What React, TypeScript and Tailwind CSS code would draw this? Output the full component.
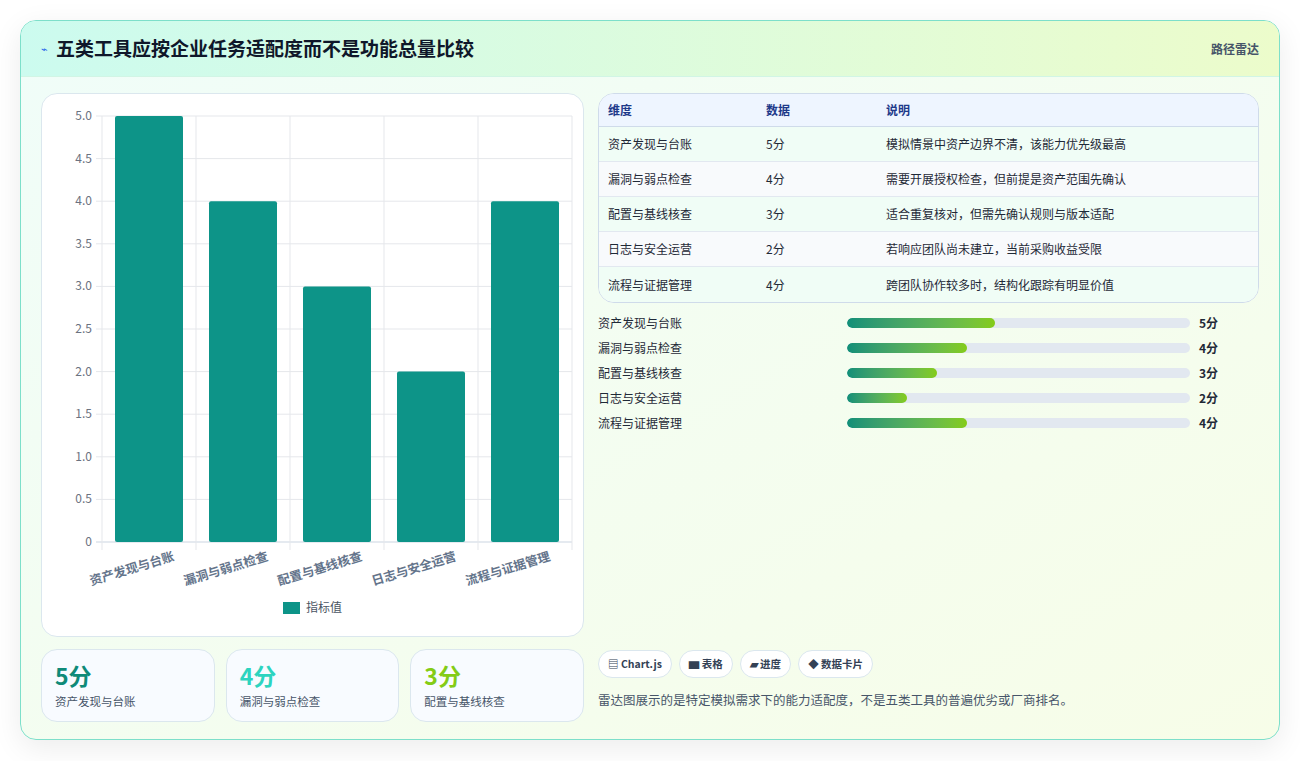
import React from "react";

const rows = [
  ["资产发现与台账", "5分", "模拟情景中资产边界不清，该能力优先级最高", 5],
  ["漏洞与弱点检查", "4分", "需要开展授权检查，但前提是资产范围先确认", 4],
  ["配置与基线核查", "3分", "适合重复核对，但需先确认规则与版本适配", 3],
  ["日志与安全运营", "2分", "若响应团队尚未建立，当前采购收益受限", 2],
  ["流程与证据管理", "4分", "跨团队协作较多时，结构化跟踪有明显价值", 4],
] as const;
const barW: Record<number, number> = { 5: 43.2, 4: 35, 3: 26.2, 2: 17.5 };

function Chart() {
  const x0 = 60, x1 = 530, yTop = 22, yBot = 448;
  const ticks = ["5.0", "4.5", "4.0", "3.5", "3.0", "2.5", "2.0", "1.5", "1.0", "0.5", "0"];
  const cw = (x1 - x0) / 5;
  return (
    <svg width="541" height="541" className="block">
      {ticks.map((t, i) => {
        const y = yTop + ((yBot - yTop) / 10) * i;
        return (
          <g key={t}>
            <line x1={x0 - 6} x2={x1} y1={y} y2={y} stroke={i === 10 ? "#cbd5e1" : "#e5e7eb"} />
            <text x={x0 - 10} y={y + 4} textAnchor="end" fontSize="12" fill="#6b7280">{t}</text>
          </g>
        );
      })}
      {[0, 1, 2, 3, 4, 5].map((i) => (
        <line key={i} x1={x0 + cw * i} x2={x0 + cw * i} y1={yTop} y2={yBot + 8} stroke="#e5e7eb" />
      ))}
      {rows.map((r, i) => {
        const h = ((yBot - yTop) / 5) * r[3];
        const cx = x0 + cw * i + cw / 2;
        return (
          <g key={i}>
            <rect x={cx - 34} y={yBot - h} width={68} height={h} rx={2} fill="#0d9488" />
            <text x={cx + 26} y={yBot + 18} textAnchor="end" fontSize="12.5" fontWeight="600" fill="#64748b" transform={`rotate(-17 ${cx + 26} ${yBot + 18})`}>{r[0]}</text>
          </g>
        );
      })}
      <rect x={241} y={508} width={17} height={12} fill="#0d9488" />
      <text x={264} y={518} fontSize="12" fill="#4b5563">指标值</text>
    </svg>
  );
}

export default function App() {
  return (
    <div className="w-[1300px] h-[761px] bg-white p-5 pt-[20px]" style={{ fontFamily: '"Noto Sans CJK SC", "Noto Sans", sans-serif' }}>
      <div className="h-[720px] rounded-2xl border border-[#7ddfca] overflow-hidden shadow-[0_8px_30px_rgba(0,0,0,0.08)] bg-gradient-to-br from-[#f0fdf9] to-[#f7fde8]">
        <div className="h-[56px] flex items-center justify-between px-5 bg-gradient-to-r from-[#ccfbef] to-[#ecfccb] border-b border-[#d1f5e5]">
          <div className="flex items-center gap-2">
            <span className="text-[#2563eb] text-[11px]">⌁</span>
            <span className="text-[19px] font-bold text-[#0f172a]">五类工具应按企业任务适配度而不是功能总量比较</span>
          </div>
          <span className="text-[12px] font-semibold text-[#475569]">路径雷达</span>
        </div>
        <div className="flex gap-[14px] px-5 pt-4">
          <div className="w-[543px] flex flex-col gap-3">
            <div className="h-[544px] rounded-2xl bg-white border border-[#dbe7ee]">
              <Chart />
            </div>
            <div className="flex gap-[11px]">
              {[["5分", "text-[#0f8a78]", "资产发现与台账"], ["4分", "text-[#2dd4bf]", "漏洞与弱点检查"], ["3分", "text-[#84cc16]", "配置与基线核查"]].map(([v, c, l]) => (
                <div key={l} className="w-[174px] h-[73px] rounded-2xl border border-[#dbe7ee] bg-[#f8fbff] px-[13px] pt-[10px]">
                  <div className={`text-[23px] font-bold leading-[30px] ${c}`}>{v}</div>
                  <div className="text-[11.5px] text-[#475569] mt-[3px]">{l}</div>
                </div>
              ))}
            </div>
          </div>
          <div className="flex-1 flex flex-col">
            <div className="rounded-2xl border border-[#cfdbea] overflow-hidden bg-white">
              <div className="h-[33px] flex items-center bg-[#eef5ff] border-b border-[#cfdbea] text-[12px] font-semibold text-[#1e3a8a] px-[9px]">
                <div className="w-[158px]">维度</div><div className="w-[120px]">数据</div><div>说明</div>
              </div>
              {rows.map((r, i) => (
                <div key={i} className={`h-[35px] flex items-center px-[9px] text-[12px] text-[#1f2937] ${i < 4 ? "border-b border-[#e2e8f0]" : ""} ${i % 2 ? "bg-[#f8fafc]" : "bg-[#f0fdf6]"}`}>
                  <div className="w-[158px]">{r[0]}</div><div className="w-[120px]">{r[1]}</div><div>{r[2]}</div>
                </div>
              ))}
            </div>
            <div className="flex flex-col gap-[9px] mt-[12px]">
              {rows.map((r, i) => (
                <div key={i} className="flex items-center h-[16px] text-[12px]">
                  <div className="w-[249px] text-[#1f2937]">{r[0]}</div>
                  <div className="w-[343px] h-[10px] rounded-full bg-[#e2e8f0] overflow-hidden">
                    <div className="h-full rounded-full bg-gradient-to-r from-[#0f8f78] to-[#84cc16]" style={{ width: `${barW[r[3]]}%` }} />
                  </div>
                  <div className="ml-[9px] font-bold text-[#1f2937]">{r[1]}</div>
                </div>
              ))}
            </div>
            <div className="mt-auto mb-[12px]">
              <div className="flex gap-[7px]">
                {["▤ Chart.js", "▆ 表格", "▰ 进度", "◆ 数据卡片"].map((c) => (
                  <span key={c} className="h-[28px] px-[9px] flex items-center rounded-full border border-[#dbe7ee] bg-white text-[10.5px] font-semibold text-[#334155]">{c}</span>
                ))}
              </div>
              <div className="mt-[13px] text-[12.5px] text-[#475569]">雷达图展示的是特定模拟需求下的能力适配度，不是五类工具的普遍优劣或厂商排名。</div>
            </div>
          </div>
        </div>
      </div>
    </div>
  );
}
